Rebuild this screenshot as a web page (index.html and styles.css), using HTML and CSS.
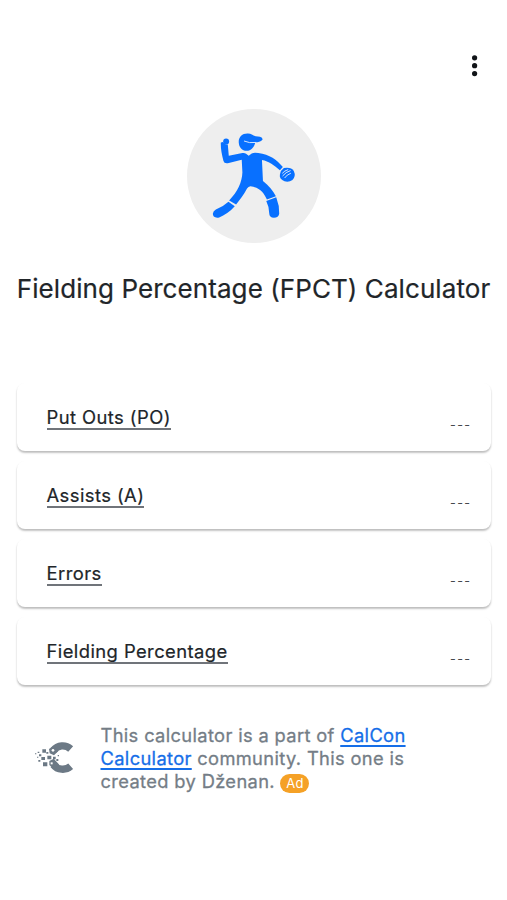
FILE: index.html
```html
<!DOCTYPE html>
<html lang="en">
<head>
<meta charset="utf-8">
<title>Fielding Percentage (FPCT) Calculator</title>
<link rel="stylesheet" href="styles.css">
</head>
<body>
<header class="topbar">
  <svg class="menu" viewBox="0 0 8 24" aria-label="Menu"><circle cx="3.6" cy="3.8" r="2.6"/><circle cx="3.6" cy="11.7" r="2.6"/><circle cx="3.6" cy="19.6" r="2.6"/></svg>
</header>
<main>
  <svg class="avatar" viewBox="21 27 404 404">
    <circle class="disc" cx="223" cy="229" r="202"/>
    <g class="player">
      <path d="M177 128C176 111 188 100 205 101C214 101 219 107 228 109L241 111Q249 113 249 119C243 126 235 127 227 128C223 143 214 153 201 153C187 153 178 143 177 128Z"/>
      <circle cx="139" cy="125" r="9"/>
      <path d="M124 128Q130 124 134 132Q138 135 144 134L147 168L188 160Q195 159 199 162L207 168L216 161Q224 157 236 160C270 164 292 181 310 202L301 212C284 197 268 185 247 181L250 244C267 258 281 273 289 290L262 300C253 280 240 263 212 260Q206 261 202 267C192 287 181 299 169 315L148 303C174 276 187 248 188 218L186 180L147 190Q133 193 131 184Q122 151 123 128Z"/>
      <path d="M146 307L165 320C151 336 134 347 118 354C105 357 98 350 99 342Q100 334 108 330Q130 322 146 307Z"/>
      <path d="M260 304L290 293Q300 318 299 343Q297 355 283 355Q269 354 269 342Q269 322 260 304Z"/>
      <path d="M304 214L313 205Q335 201 343 214Q350 230 339 241Q328 249 315 245Q299 238 301 225Z"/>
    </g>
    <path class="cut" d="M194 124Q208 131 229 128M309 220Q315 213 325 210M310 228Q319 217 332 213M316 234Q322 225 333 221"/>
  </svg>
  <h1>Fielding Percentage (FPCT) Calculator</h1>
  <section class="fields">
    <div class="card"><span class="label">Put Outs (PO)</span><span class="value">---</span></div>
    <div class="card"><span class="label">Assists (A)</span><span class="value">---</span></div>
    <div class="card"><span class="label">Errors</span><span class="value">---</span></div>
    <div class="card"><span class="label">Fielding Percentage</span><span class="value">---</span></div>
  </section>
  <footer>
    <svg class="logo" viewBox="0 0 120 105">
      <path class="arc" d="M107 27A36 36 0 0 0 55 31M107 79A36 36 0 0 1 55 74"/>
      <path d="M42 27l14-9 15 14-14 14-13-6zM43 63l13-7 17 18-16 13-14-12zM22 28h11v10H22zM19 51h11v9H19zM24 67h13v12H24zM37 47h12v11H37zM54 50h8v8h-8zM64 57h6v6h-6zM68 45h4v4h-4zM12 43h7v6h-7zM8 35h5v4H8zM0 40h4v3H0zM6 50h4v3H6zM10 60h6v5h-6zM34 36h6v5h-6z"/>
      <circle class="hole" cx="54" cy="31" r="4"/><path class="hole" d="M47 67h6v6h-6z"/>
    </svg>
    <p>This calculator is a part of <a href="#">CalCon</a><br><a href="#">Calculator</a> community. This one is<br>created by Dženan. <span class="badge">Ad</span></p>
  </footer>
</main>
</body>
</html>
```

FILE: styles.css
```css
* { box-sizing: border-box; }
body { margin: 0; background: #fff; color: #212529; font-family: Inter, sans-serif; }
.topbar { height: 109px; padding: 54px 28px 0 0; display: flex; justify-content: flex-end; }
.menu { width: 8px; height: 24px; fill: #111418; }
main { display: flex; flex-direction: column; align-items: center; }
.avatar { width: 134px; height: 134px; margin: 0 0 1px 1px; }
.disc { fill: #eee; }
.player { fill: #0870ff; }
.cut { fill: none; stroke: #d7e7ff; stroke-width: 3; stroke-linecap: round; }
h1 { margin: 29px 0 0; font-size: 26px; line-height: 32px; font-weight: 400; letter-spacing: .08px; white-space: nowrap; -webkit-text-stroke: .2px; }
.fields { width: 474px; margin-top: 78px; display: grid; gap: 10px; }
.card { height: 68px; padding: 0 19px 0 30px; border-radius: 8px; background: #fff; box-shadow: 0 2px 2px rgba(0,0,0,.22), 0 1px 2px rgba(0,0,0,.06); display: flex; justify-content: space-between; align-items: flex-start; }
.label { margin-top: 20px; height: 27px; border-bottom: 2px solid #70747a; font-size: 18.4px; line-height: 28px; letter-spacing: .43px; -webkit-text-stroke: .2px; }
.value { margin-top: 30px; color: #45494d; font-size: 12.5px; line-height: 24px; letter-spacing: 1.4px; }
footer { width: 474px; margin-top: 39px; padding-left: 18px; display: flex; }
.logo { width: 40px; height: 35px; margin: 16px 26px 0 0; fill: #6c7985; }
.arc { fill: none; stroke: #6c7985; stroke-width: 22; }
.hole { fill: #fff; }
p { margin: 0; color: #747d86; font-size: 18.3px; line-height: 23px; letter-spacing: .36px; white-space: nowrap; -webkit-text-stroke: .3px; }
a { color: #156ee8; text-decoration-thickness: 1.5px; text-underline-offset: 2.5px; }
.badge { display: inline-block; width: 29px; height: 19px; border-radius: 10px; background: #f5a126; color: #fff; font-size: 13px; line-height: 19px; text-align: center; vertical-align: 0; -webkit-text-stroke: 0; }
```
